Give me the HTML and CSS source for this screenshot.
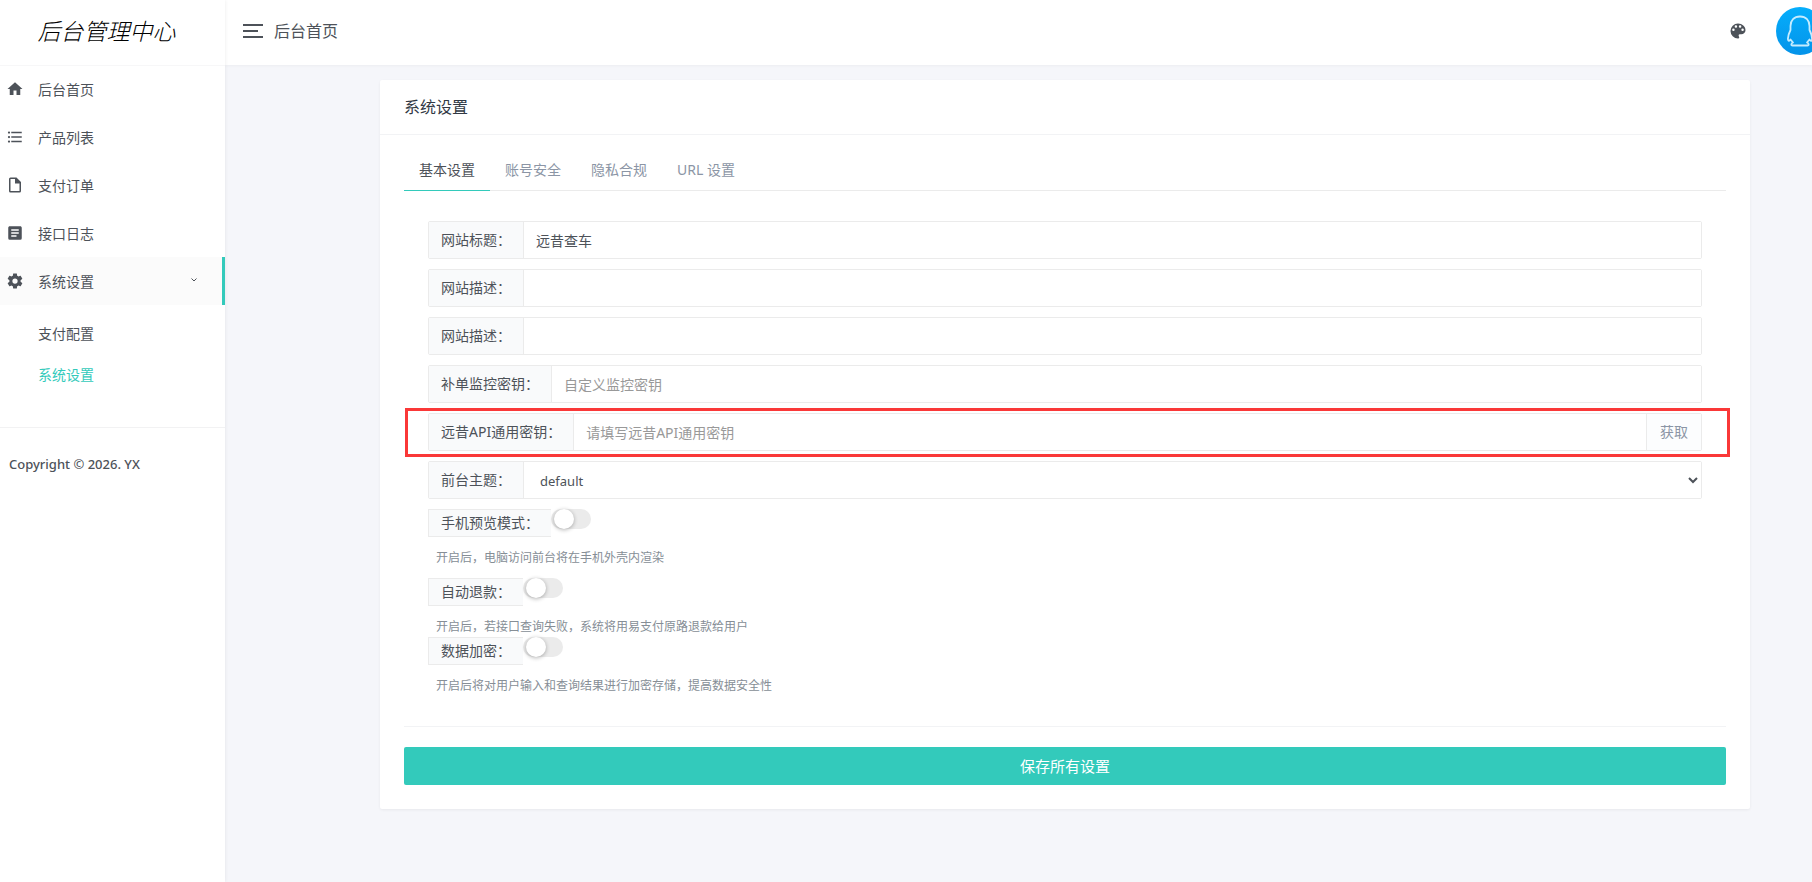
FILE: index.html
```
<!DOCTYPE html>
<html lang="zh-CN">
<head>
    <meta charset="UTF-8">
    <meta name="viewport" content="width=device-width, initial-scale=1.0">
    <title>系统设置 - 后台管理中心</title>
    <link rel="stylesheet" href="styles.css">
</head>
<body>
    <div class="layout">
        <aside class="sidebar">
            <a class="logo" href="#">后台管理中心</a>
            <nav>
                <a class="nav-item" href="#">
                    <svg class="icon" viewBox="0 0 24 24"><path d="M10,20V14H14V20H19V12H22L12,3L2,12H5V20H10Z"/></svg>
                    <span>后台首页</span>
                </a>
                <a class="nav-item" href="#">
                    <svg class="icon" viewBox="0 0 24 24"><path d="M7,5H21V7H7V5M7,13V11H21V13H7M4,4.5A1.5,1.5 0 0,1 5.5,6A1.5,1.5 0 0,1 4,7.5A1.5,1.5 0 0,1 2.5,6A1.5,1.5 0 0,1 4,4.5M4,10.5A1.5,1.5 0 0,1 5.5,12A1.5,1.5 0 0,1 4,13.5A1.5,1.5 0 0,1 2.5,12A1.5,1.5 0 0,1 4,10.5M7,19V17H21V19H7M4,16.5A1.5,1.5 0 0,1 5.5,18A1.5,1.5 0 0,1 4,19.5A1.5,1.5 0 0,1 2.5,18A1.5,1.5 0 0,1 4,16.5Z"/></svg>
                    <span>产品列表</span>
                </a>
                <a class="nav-item" href="#">
                    <svg class="icon" viewBox="0 0 24 24"><path d="M14,2H6A2,2 0 0,0 4,4V20A2,2 0 0,0 6,22H18A2,2 0 0,0 20,20V8L14,2M18,20H6V4H12V10H18V20Z"/></svg>
                    <span>支付订单</span>
                </a>
                <a class="nav-item" href="#">
                    <svg class="icon" viewBox="0 0 24 24"><path d="M14,17H7V15H14M17,13H7V11H17M17,9H7V7H17M19,3H5C3.89,3 3,3.89 3,5V19A2,2 0 0,0 5,21H19A2,2 0 0,0 21,19V5C21,3.89 20.1,3 19,3Z"/></svg>
                    <span>接口日志</span>
                </a>
                <a class="nav-item active" href="#">
                    <svg class="icon" viewBox="0 0 24 24"><path d="M12,15.5A3.5,3.5 0 0,1 8.5,12A3.5,3.5 0 0,1 12,8.5A3.5,3.5 0 0,1 15.5,12A3.5,3.5 0 0,1 12,15.5M19.43,12.97C19.47,12.65 19.5,12.33 19.5,12C19.5,11.67 19.47,11.34 19.43,11L21.54,9.37C21.73,9.22 21.78,8.95 21.66,8.73L19.66,5.27C19.54,5.05 19.27,4.96 19.05,5.05L16.56,6.05C16.04,5.66 15.5,5.32 14.87,5.07L14.5,2.42C14.46,2.18 14.25,2 14,2H10C9.75,2 9.54,2.18 9.5,2.42L9.13,5.07C8.5,5.32 7.96,5.66 7.44,6.05L4.95,5.05C4.73,4.96 4.46,5.05 4.34,5.27L2.34,8.73C2.21,8.95 2.27,9.22 2.46,9.37L4.57,11C4.53,11.34 4.5,11.67 4.5,12C4.5,12.33 4.53,12.65 4.57,12.97L2.46,14.63C2.27,14.78 2.21,15.05 2.34,15.27L4.34,18.73C4.46,18.95 4.73,19.03 4.95,18.95L7.44,17.94C7.96,18.34 8.5,18.68 9.13,18.93L9.5,21.58C9.54,21.82 9.75,22 10,22H14C14.25,22 14.46,21.82 14.5,21.58L14.87,18.93C15.5,18.67 16.04,18.34 16.56,17.94L19.05,18.95C19.27,19.03 19.54,18.95 19.66,18.73L21.66,15.27C21.78,15.05 21.73,14.78 21.54,14.63L19.43,12.97Z"/></svg>
                    <span>系统设置</span>
                    <svg class="arrow" viewBox="0 0 6 4"><path d="M0.5,0.5L3,3L5.5,0.5"/></svg>
                </a>
                <div class="subnav">
                    <a href="#">支付配置</a>
                    <a class="current" href="#">系统设置</a>
                </div>
            </nav>
            <p class="copyright">Copyright © 2026. YX</p>
        </aside>

        <div class="page">
            <header class="topbar">
                <button class="toggler" type="button" aria-label="菜单"><i></i><i></i><i></i></button>
                <span class="topbar-title">后台首页</span>
                <button class="skin" type="button" aria-label="主题">
                    <svg viewBox="0 0 24 24"><path d="M17.5,12A1.5,1.5 0 0,1 16,10.5A1.5,1.5 0 0,1 17.5,9A1.5,1.5 0 0,1 19,10.5A1.5,1.5 0 0,1 17.5,12M14.5,8A1.5,1.5 0 0,1 13,6.5A1.5,1.5 0 0,1 14.5,5A1.5,1.5 0 0,1 16,6.5A1.5,1.5 0 0,1 14.5,8M9.5,8A1.5,1.5 0 0,1 8,6.5A1.5,1.5 0 0,1 9.5,5A1.5,1.5 0 0,1 11,6.5A1.5,1.5 0 0,1 9.5,8M6.5,12A1.5,1.5 0 0,1 5,10.5A1.5,1.5 0 0,1 6.5,9A1.5,1.5 0 0,1 8,10.5A1.5,1.5 0 0,1 6.5,12M12,3A9,9 0 0,0 3,12A9,9 0 0,0 12,21A1.5,1.5 0 0,0 13.5,19.5C13.5,19.11 13.35,18.76 13.11,18.5C12.88,18.23 12.73,17.88 12.73,17.5A1.5,1.5 0 0,1 14.23,16H16A5,5 0 0,0 21,11C21,6.58 16.97,3 12,3Z"/></svg>
                </button>
                <svg class="avatar" viewBox="0 0 48 48">
                    <defs>
                        <linearGradient id="sky" x1="0" y1="0" x2="0" y2="1">
                            <stop offset="0" stop-color="#05aefc"/>
                            <stop offset="1" stop-color="#0493e9"/>
                        </linearGradient>
                    </defs>
                    <circle cx="24" cy="24" r="24" fill="url(#sky)"/>
                    <path d="M24,9.5C18,9.5 14.5,13.5 14.5,19V23C13,26 11.6,29 12,32.500C12.200,34.500 13.500,34 14.500,32.500L17,35.500C15,36.200 14.800,38.500 16.500,38.500H31.500C33.200,38.500 33,36.200 31,35.500L33.500,32.500C34.500,34 35.800,34.500 36,32.500C36.400,29 35,26 33.500,23V19C33.500,13.500 30,9.500 24,9.500Z" fill="none" stroke="#c5ecff" stroke-width="1.8" stroke-linejoin="round"/>
                </svg>
            </header>

            <main class="content">
                <section class="card">
                    <h1 class="card-title">系统设置</h1>
                    <div class="card-body">
                        <nav class="tabs">
                            <a class="active" href="#">基本设置</a>
                            <a href="#">账号安全</a>
                            <a href="#">隐私合规</a>
                            <a href="#">URL 设置</a>
                        </nav>
                        <form>
                            <div class="fields">
                                <div class="input-group">
                                    <label for="title">网站标题：</label>
                                    <input type="text" id="title" value="远昔查车">
                                </div>
                                <div class="input-group">
                                    <label for="keywords">网站描述：</label>
                                    <input type="text" id="keywords">
                                </div>
                                <div class="input-group">
                                    <label for="description">网站描述：</label>
                                    <input type="text" id="description">
                                </div>
                                <div class="input-group">
                                    <label for="cronkey">补单监控密钥：</label>
                                    <input type="text" id="cronkey" placeholder="自定义监控密钥">
                                </div>
                                <div class="input-group marked">
                                    <label for="apikey">远昔API通用密钥：</label>
                                    <input type="text" id="apikey" placeholder="请填写远昔API通用密钥">
                                    <button type="button">获取</button>
                                </div>
                                <div class="input-group">
                                    <label for="theme">前台主题：</label>
                                    <select id="theme"><option>default</option></select>
                                </div>
                                <div class="switch-group spaced">
                                    <label for="preview">手机预览模式：</label>
                                    <input type="checkbox" id="preview">
                                    <small>开启后，电脑访问前台将在手机外壳内渲染</small>
                                </div>
                                <div class="switch-group">
                                    <label for="refund">自动退款：</label>
                                    <input type="checkbox" id="refund">
                                    <small>开启后，若接口查询失败，系统将用易支付原路退款给用户</small>
                                </div>
                                <div class="switch-group">
                                    <label for="encrypt">数据加密：</label>
                                    <input type="checkbox" id="encrypt">
                                    <small>开启后将对用户输入和查询结果进行加密存储，提高数据安全性</small>
                                </div>
                            </div>
                            <div class="actions">
                                <button class="save" type="submit">保存所有设置</button>
                            </div>
                        </form>
                    </div>
                </section>
            </main>
        </div>
    </div>
</body>
</html>
```
FILE: styles.css
```
* {
    box-sizing: border-box;
}

body {
    margin: 0;
    font-family: "Noto Sans", "Noto Sans CJK SC", sans-serif;
    font-size: 14px;
    line-height: 20px;
    color: #4d5259;
    background: #f5f6fa;
    overflow-x: hidden;
}

a {
    color: inherit;
    text-decoration: none;
}

button,
input,
select {
    font: inherit;
    color: inherit;
}

.layout {
    display: flex;
    min-height: 100vh;
}

/* sidebar */
.sidebar {
    position: relative;
    z-index: 2;
    flex: 0 0 225px;
    background: #fff;
    box-shadow: 0 0 4px rgba(0, 0, 0, 0.08);
}

.logo {
    display: flex;
    align-items: center;
    justify-content: center;
    height: 65px;
    padding: 0 12px 6px 0;
    font-family: "Noto Sans CJK SC", sans-serif;
    font-size: 23px;
    font-weight: 300;
    font-style: italic;
    color: #000;
    box-shadow: 0 1px 0 #f7f7f8;
}

.nav-item {
    display: flex;
    align-items: center;
    height: 48px;
    padding: 0 28px 0 6px;
}

.nav-item span {
    padding-top: 2px;
}

.nav-item.active {
    background: #fbfbfb;
    border-right: 3px solid #33cabb;
    padding-right: 25px;
}

.icon {
    width: 18px;
    height: 18px;
    margin-right: 14px;
    fill: #4d5259;
}

.arrow {
    width: 6px;
    height: 4px;
    margin: 0 0 2px auto;
    fill: none;
    stroke: #4d5259;
}

.subnav {
    padding: 9px 0 31px;
    border-bottom: 1px solid #f2f2f3;
}

.subnav a {
    display: block;
    padding: 10px 38px 11px;
}

.subnav .current {
    color: #33cabb;
}

.copyright {
    margin: 26px 9px;
    font-size: 13px;
    font-weight: 500;
}

/* top bar */
.page {
    flex: 1;
    min-width: 0;
}

.topbar {
    display: flex;
    align-items: center;
    height: 65px;
    padding: 0 0 3px 18px;
    background: #fff;
    box-shadow: 0 1px 3px rgba(0, 0, 0, 0.04);
}

.toggler {
    display: flex;
    flex-direction: column;
    gap: 4px;
    width: 20px;
    margin-right: 11px;
    padding: 0;
    border: 0;
    background: none;
}

.toggler i {
    width: 20px;
    height: 2px;
    background: #4d5259;
}

.toggler i:nth-child(2) {
    width: 15px;
}

.topbar-title {
    font-size: 16px;
}

.skin {
    display: flex;
    margin-left: auto;
    padding: 0;
    border: 0;
    background: none;
}

.skin svg {
    width: 20px;
    height: 20px;
    fill: #4d5259;
}

/* the avatar runs past the right edge of the window */
.avatar {
    flex: none;
    width: 48px;
    height: 48px;
    margin: 0 -12px 0 28px;
}

/* card */
.content {
    padding: 15px 62px 15px 155px;
}

.card {
    background: #fff;
    border-radius: 2px;
    box-shadow: 0 1px 3px rgba(0, 0, 0, 0.06);
}

.card-title {
    margin: 0;
    padding: 17px 24px;
    font-size: 16px;
    font-weight: 400;
    color: #313944;
    border-bottom: 1px solid #f2f3f5;
}

.card-body {
    padding: 15px 24px 24px;
}

.tabs {
    display: flex;
    color: #8b95a5;
    border-bottom: 1px solid #ebebeb;
}

.tabs a {
    padding: 10px 15px;
    margin-bottom: -1px;
    border-bottom: 1px solid transparent;
}

.tabs .active {
    color: #4d5259;
    border-color: #33cabb;
}

/* form */
.fields {
    padding: 30px 24px 0;
}

.input-group {
    position: relative;
    display: flex;
    height: 38px;
    margin-bottom: 10px;
    border: 1px solid #ebebeb;
    border-radius: 2px;
}

.input-group label {
    padding: 8px 12px;
    background: #f9fafb;
    border-right: 1px solid #ebebeb;
    white-space: nowrap;
}

.input-group input,
.input-group select {
    flex: 1;
    min-width: 0;
    padding: 2px 12px 0;
    border: 0;
    outline: 0;
    background: #fff;
}

.input-group select {
    font-size: 13px;
}

.input-group ::placeholder {
    color: #999;
    opacity: 1;
}

.input-group button {
    padding: 0 13px;
    color: #8b95a5;
    background: #fcfdfe;
    border: 0;
    border-left: 1px solid #ebebeb;
}

.marked::after {
    content: "";
    position: absolute;
    inset: -6px -29px -7px -24px;
    border: 3px solid #fa3838;
    pointer-events: none;
}

.switch-group {
    display: flex;
    flex-wrap: wrap;
    align-items: flex-start;
}

.switch-group.spaced {
    margin-bottom: 10px;
}

.switch-group label {
    height: 28px;
    padding: 3px 12px;
    background: #f9fafb;
    border: 1px solid #ebebeb;
    border-right: 0;
}

.switch-group input {
    position: relative;
    width: 40px;
    height: 20px;
    margin: 0;
    appearance: none;
    background: #ebebeb;
    border-radius: 10px;
}

.switch-group input::before {
    content: "";
    position: absolute;
    left: 3px;
    width: 20px;
    height: 20px;
    background: #fff;
    border-radius: 50%;
    box-shadow: 0 1px 4px rgba(0, 0, 0, 0.3);
}

.switch-group input:checked {
    background: #33cabb;
}

.switch-group input:checked::before {
    left: 18px;
}

.switch-group small {
    flex: 0 0 100%;
    padding: 11px 8px 0;
    font-size: 12px;
    color: #868e96;
}

.actions {
    margin-top: 30px;
    padding-top: 20px;
    border-top: 1px solid #f2f3f5;
}

.save {
    display: block;
    width: 100%;
    height: 38px;
    font-size: 15px;
    color: #fff;
    background: #33cabb;
    border: 0;
    border-radius: 2px;
}
```
